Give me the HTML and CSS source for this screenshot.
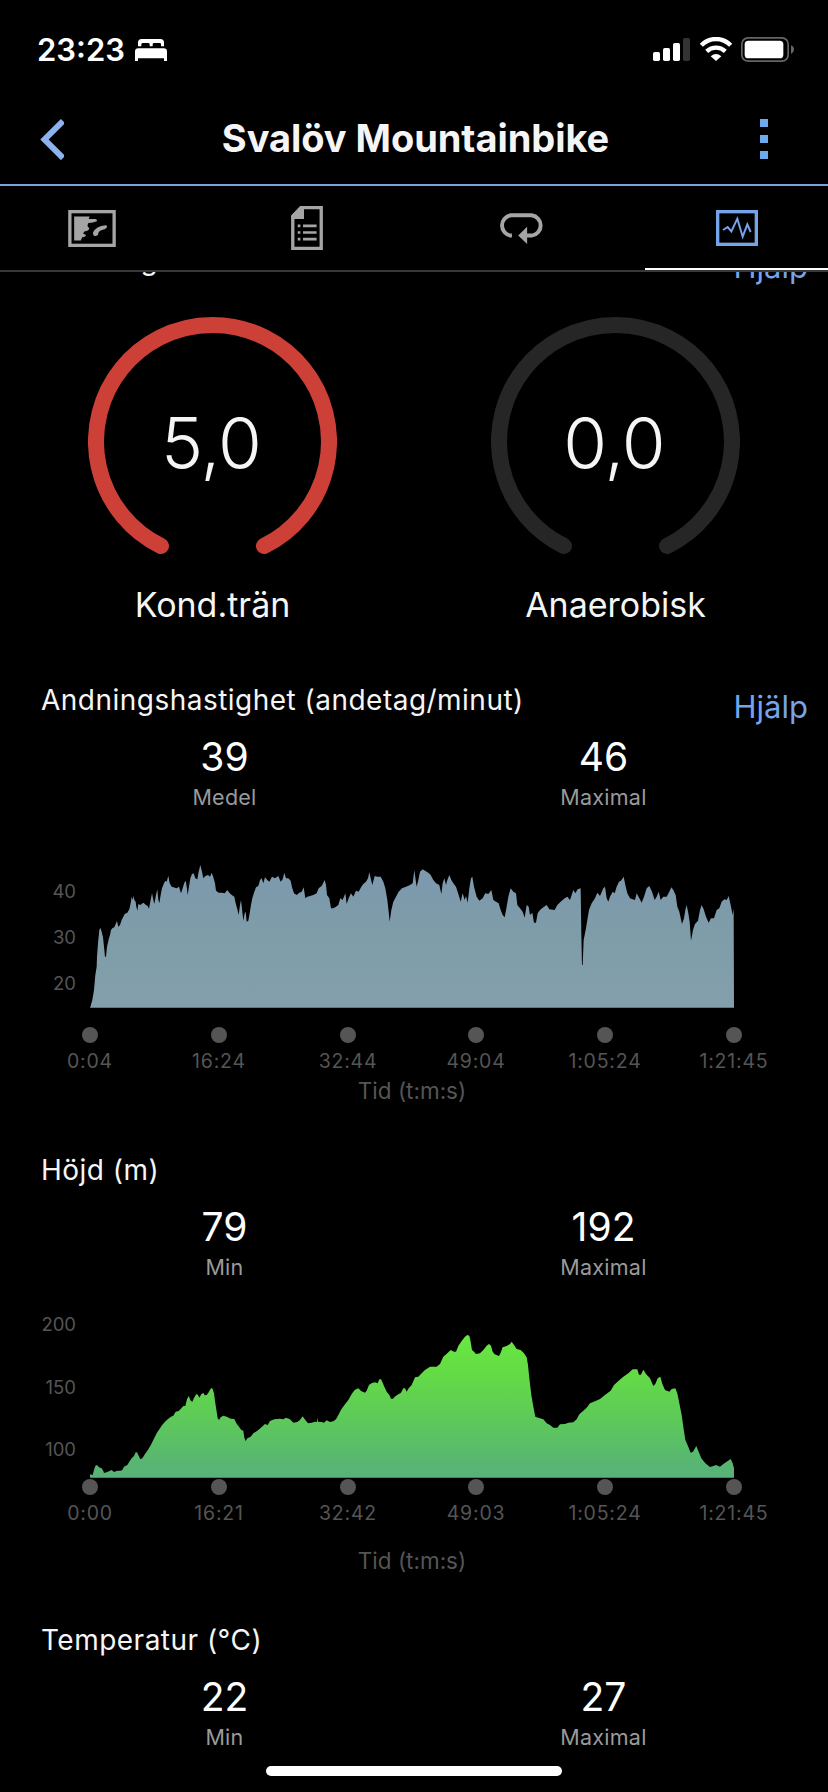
FILE: index.html
```html
<!DOCTYPE html>
<html lang="sv">
<head>
<meta charset="utf-8">
<title>Svalöv Mountainbike</title>
<link rel="stylesheet" href="styles.css">
</head>
<body>

<div class="statusbar">
  <span class="clock">23:23</span>
  <svg class="bed" width="32" height="22" viewBox="0 0 96 66">
    <path fill="#fff" d="M9 22V11Q9 0 20 0H76Q87 0 87 11V22H78V16Q78 12 74 12H58Q53 12 53 16V22H44V16Q44 12 39 12H24Q19 12 19 16V22zM0 66V38Q0 28 10 28H86Q96 28 96 38V66H87V58H9V66z"/>
  </svg>
  <div class="status-icons">
    <svg width="37" height="23" viewBox="0 0 111 69">
      <rect x="0" y="42" width="21" height="27" rx="5" fill="#fff"/>
      <rect x="30" y="30" width="21" height="39" rx="5" fill="#fff"/>
      <rect x="60" y="15" width="21" height="54" rx="5" fill="#fff"/>
      <rect x="90" y="0" width="21" height="69" rx="5" fill="#333"/>
    </svg>
    <svg width="32" height="24" viewBox="0 0 96 72">
      <path d="M4 25Q22 6 48 6T92 25M20 43Q32 32 48 32T76 43" fill="none" stroke="#fff" stroke-width="13"/>
      <path d="M32 58Q48 44 64 58L48 72z" fill="#fff"/>
    </svg>
    <svg width="53" height="25" viewBox="0 0 159 75">
      <rect x="2.5" y="2.5" width="139" height="70" rx="19" fill="none" stroke="#666" stroke-width="5"/>
      <rect x="11" y="11" width="116" height="53" rx="11" fill="#fff"/>
      <path d="M150 25Q159 29 159 37.500T150 51z" fill="#666"/>
    </svg>
  </div>
</div>

<div class="navbar">
  <svg class="back" width="24" height="42" viewBox="0 0 24 42">
    <path d="M23 3L4.500 21.500L23 40" fill="none" stroke="#8ab3f0" stroke-width="6"/>
  </svg>
  <h1>Svalöv Mountainbike</h1>
  <div class="more"><i></i><i></i><i></i></div>
</div>

<div class="tabs">
  <div class="tab">
    <svg width="48" height="37" viewBox="0 0 144 112">
      <rect x="5" y="5" width="134" height="102" fill="none" stroke="#a5a5a5" stroke-width="10"/>
      <path fill="#a5a5a5" d="M18 20H65L62 27H82Q90 29 86 34Q80 38 61 39L58 48L64 56Q62 63 49 65L45 71L54 76Q52 83 43 82L38 92H18z"/>
      <path fill="#a5a5a5" d="M113 46Q84 49 75 68Q75 82 85 78Q92 76 92 67Q95 63 105 60Q120 56 117 48z"/>
    </svg>
  </div>
  <div class="tab">
    <svg width="32" height="44" viewBox="0 0 96 133">
      <path d="M30 5H91V128H5V32z" fill="none" stroke="#a5a5a5" stroke-width="10"/>
      <path d="M0 39V29L28 0H39V39z" fill="#a5a5a5"/>
      <path d="M36 60H77M36 80H77M36 100H77M20 60H28M20 80H28M20 100H28" stroke="#a5a5a5" stroke-width="8"/>
    </svg>
  </div>
  <div class="tab">
    <svg width="45" height="31" viewBox="0 0 136 94">
      <path d="M39 68.500H36A31 31 0 0 1 36 7H99A31 31 0 0 1 99 68.500H84" fill="none" stroke="#a5a5a5" stroke-width="12"/>
      <path d="M58 68L85 42V94z" fill="#a5a5a5"/>
    </svg>
  </div>
  <div class="tab active">
    <svg width="42" height="36" viewBox="0 0 126 108">
      <rect x="5" y="5" width="116" height="98" fill="none" stroke="#74a4ea" stroke-width="10"/>
      <path d="M21 60L35 51L46 64L64 26L80 80L94 43L104 66" fill="none" stroke="#74a4ea" stroke-width="6"/>
    </svg>
  </div>
</div>

<div class="content">

  <div class="section effect">
    <div class="head"><h2>Träningseffekt</h2><a class="help">Hjälp</a></div>
    <div class="gauges">
      <div class="gauge">
        <svg width="249" height="249" viewBox="0 0 249 249">
          <path class="ring red" d="M73 229A116.500 116.500 0 1 1 176 229"/>
          <text x="123" y="151.500">5,0</text>
        </svg>
        <p>Kond.trän</p>
      </div>
      <div class="gauge">
        <svg width="249" height="249" viewBox="0 0 249 249">
          <path class="ring" d="M73 229A116.500 116.500 0 1 1 176 229"/>
          <text x="123" y="151.500">0,0</text>
        </svg>
        <p>Anaerobisk</p>
      </div>
    </div>
  </div>

  <div class="section">
    <div class="head"><h2>Andningshastighet (andetag/minut)</h2><a class="help">Hjälp</a></div>
    <div class="stats">
      <div class="stat"><b>39</b><span>Medel</span></div>
      <div class="stat"><b>46</b><span>Maximal</span></div>
    </div>
    <svg class="chart" width="828" height="338" viewBox="0 0 828 338">
      <defs>
        <linearGradient id="breath" x1="0" y1="0" x2="0" y2="1">
          <stop offset="0" stop-color="#7c99af"/>
          <stop offset=".5" stop-color="#7f9ca9"/>
          <stop offset="1" stop-color="#829fab"/>
        </linearGradient>
      </defs>
      <polygon fill="url(#breath)" transform="translate(90 38) scale(.33333)" points="
        0,473 2,468 7,450 12,420 16,375 20,350 21,320 24,280 28,240 31,233 35,245 39,262 42,290 45,320 48,320
        51,290 56,268 60,255 63,240 67,235 73,232 78,220 81,213 85,230 90,225 95,210 100,200 104,192 112,188
        118,178 122,160 125,140 128,150 130,137 133,150 137,155 139,170 142,182 145,162 151,165 160,158 168,165
        173,168 177,176 182,150 186,130 190,150 193,162 198,135 202,118 205,150 208,160 212,135 216,115 222,100
        226,92 230,95 235,77 239,100 245,110 250,112 260,115 267,110 273,130 278,115 283,98 287,92 290,110
        293,135 297,110 301,85 306,72 311,70 316,85 322,88 326,65 331,45 336,65 340,85 346,78 354,75 360,80
        365,68 370,82 375,100 378,122 386,128 395,128 404,130 412,120 418,128 425,135 433,140 437,160 442,178
        446,195 450,165 453,150 457,185 460,212 464,190 467,185 470,215 475,212 479,190 483,165 487,145 492,128
        498,112 505,108 510,90 515,85 520,100 525,82 532,90 538,95 546,80 555,85 565,78 572,95 578,88 583,68
        588,85 595,85 602,92 606,112 612,130 620,135 628,128 635,125 641,112 646,145 652,140 660,138 670,135
        680,130 686,115 695,108 704,90 708,105 711,135 718,145 723,175 730,175 738,170 745,165 751,145 758,150
        766,130 770,162 776,145 783,130 790,140 798,122 806,125 814,110 820,102 828,95 834,85 838,67 842,85
        847,105 854,78 862,80 872,80 880,95 886,115 892,150 896,185 899,215 904,180 910,155 918,140 926,125
        936,115 948,110 960,105 968,100 973,60 977,90 980,110 985,90 990,65 998,58 1005,62 1015,68 1022,75
        1030,90 1038,100 1048,105 1054,133 1058,100 1063,85 1068,105 1072,90 1078,75 1084,90 1090,100 1098,110
        1106,135 1112,155 1118,130 1124,150 1128,138 1133,158 1138,115 1143,85 1147,80 1152,110 1160,140
        1168,152 1178,145 1186,130 1195,132 1204,120 1210,150 1218,155 1226,160 1232,180 1238,195 1244,202
        1250,170 1255,140 1262,115 1270,125 1278,130 1282,165 1290,175 1298,185 1304,203 1310,165 1316,170
        1320,195 1327,188 1332,218 1338,218 1343,190 1350,180 1360,172 1370,165 1378,178 1394,180 1402,165
        1412,155 1424,145 1432,140 1440,150 1445,135 1450,120 1456,130 1463,118 1472,115 1474,250 1476,345
        1478,345 1481,270 1488,235 1492,210 1497,180 1505,160 1515,145 1522,128 1530,138 1540,115 1545,110
        1550,145 1555,155 1560,140 1568,125 1574,130 1580,110 1587,95 1593,92 1598,85 1601,80 1606,105 1612,130
        1620,145 1628,148 1635,150 1640,130 1648,145 1655,158 1662,140 1670,115 1678,108 1686,125 1694,150
        1700,140 1706,125 1712,150 1720,140 1730,140 1738,125 1744,112 1750,120 1757,135 1762,170 1768,185
        1776,222 1782,205 1786,180 1790,165 1795,190 1799,215 1803,272 1809,240 1815,222 1824,212 1830,180
        1835,165 1841,178 1848,200 1856,218 1863,205 1872,205 1880,180 1888,175 1895,155 1903,148 1910,150
        1916,138 1922,165 1928,195 1931,175 1932,473"/>
      <g class="ylabels">
        <text x="76" y="86">40</text>
        <text x="76" y="132">30</text>
        <text x="76" y="178">20</text>
      </g>
      <g class="dots">
        <circle cx="90" cy="223" r="8"/><circle cx="219" cy="223" r="8"/><circle cx="348" cy="223" r="8"/>
        <circle cx="476" cy="223" r="8"/><circle cx="605" cy="223" r="8"/><circle cx="734" cy="223" r="8"/>
      </g>
      <g class="xlabels">
        <text x="90" y="256">0:04</text>
        <text x="219" y="256">16:24</text>
        <text x="348" y="256">32:44</text>
        <text x="476" y="256">49:04</text>
        <text x="605" y="256">1:05:24</text>
        <text x="734" y="256">1:21:45</text>
      </g>
      <text class="unit" x="412" y="287">Tid (t:m:s)</text>
    </svg>
  </div>

  <div class="section">
    <div class="head"><h2>Höjd (m)</h2></div>
    <div class="stats">
      <div class="stat"><b>79</b><span>Min</span></div>
      <div class="stat"><b>192</b><span>Maximal</span></div>
    </div>
    <svg class="chart" width="828" height="338" viewBox="0 0 828 338">
      <defs>
        <linearGradient id="height" x1="0" y1="0" x2="0" y2="1">
          <stop offset="0" stop-color="#69e842"/>
          <stop offset=".25" stop-color="#64dc45"/>
          <stop offset=".6" stop-color="#5dc95a"/>
          <stop offset=".9" stop-color="#58b572"/>
          <stop offset="1" stop-color="#58b27a"/>
        </linearGradient>
      </defs>
      <polygon fill="url(#height)" transform="translate(90 24.670) scale(.33333)" points="
        0,513 0,503 8,505 12,490 16,478 21,475 27,482 35,485 40,493 42,499 52,496 65,490 72,496 82,492 92,492
        97,490 102,480 112,475 118,465 125,455 132,448 137,437 141,437 146,447 151,458 157,455 165,442 175,428
        183,414 191,398 200,380 208,368 216,356 225,345 234,337 243,330 250,327 257,315 266,313 274,305 280,298
        286,298 291,278 296,268 302,282 307,285 313,272 319,262 324,265 328,273 334,263 340,258 344,266 350,265
        356,257 363,245 367,245 372,260 376,290 380,315 383,335 387,340 392,332 400,327 410,330 422,336 433,337
        439,350 448,362 454,370 460,372 463,393 467,403 472,395 482,390 490,380 502,372 512,364 525,352 533,355
        540,343 553,338 570,336 580,338 588,333 600,338 610,348 622,346 630,340 638,329 646,340 654,350 665,348
        675,345 681,346 682,332 684,345 695,346 702,348 710,341 720,346 730,344 738,338 745,325 754,308 765,293
        775,280 785,262 794,250 805,245 813,253 825,258 830,252 837,235 846,229 855,227 863,230 868,218 873,218
        878,228 883,240 890,255 898,265 903,276 909,276 914,270 925,263 933,258 940,245 945,245 950,255 956,245
        965,235 975,212 985,210 995,200 1005,190 1020,180 1040,180 1050,172 1060,150 1072,140 1082,130 1092,135
        1098,135 1105,118 1115,103 1125,90 1132,85 1138,87 1142,105 1146,130 1152,135 1158,142 1170,140 1180,130
        1190,117 1197,112 1203,117 1208,135 1214,143 1227,148 1232,138 1238,122 1250,118 1260,112 1265,105
        1272,115 1280,127 1292,130 1302,140 1310,152 1314,175 1318,215 1324,265 1330,300 1336,330 1345,333
        1360,338 1370,350 1380,355 1390,363 1402,363 1410,353 1425,352 1435,348 1450,347 1460,338 1468,323
        1480,312 1490,303 1500,290 1515,284 1530,277 1545,265 1562,252 1572,235 1585,223 1600,210 1615,200
        1628,188 1642,188 1647,204 1653,204 1660,189 1668,202 1680,215 1690,238 1696,232 1703,215 1711,210
        1717,232 1725,250 1738,255 1745,247 1756,245 1762,260 1768,290 1775,325 1780,360 1786,400 1794,418
        1802,438 1809,435 1819,418 1826,435 1834,455 1846,470 1860,481 1870,478 1878,475 1890,480 1900,472
        1910,465 1922,457 1928,470 1932,485 1932,513"/>
      <g class="ylabels">
        <text x="76" y="49">200</text>
        <text x="76" y="111.500">150</text>
        <text x="76" y="174">100</text>
      </g>
      <g class="dots">
        <circle cx="90" cy="205" r="8"/><circle cx="219" cy="205" r="8"/><circle cx="348" cy="205" r="8"/>
        <circle cx="476" cy="205" r="8"/><circle cx="605" cy="205" r="8"/><circle cx="734" cy="205" r="8"/>
      </g>
      <g class="xlabels">
        <text x="90" y="238">0:00</text>
        <text x="219" y="238">16:21</text>
        <text x="348" y="238">32:42</text>
        <text x="476" y="238">49:03</text>
        <text x="605" y="238">1:05:24</text>
        <text x="734" y="238">1:21:45</text>
      </g>
      <text class="unit" x="412" y="287">Tid (t:m:s)</text>
    </svg>
  </div>

  <div class="section">
    <div class="head"><h2>Temperatur (°C)</h2></div>
    <div class="stats">
      <div class="stat"><b>22</b><span>Min</span></div>
      <div class="stat"><b>27</b><span>Maximal</span></div>
    </div>
  </div>

</div>

<div class="home"></div>

</body>
</html>
```
FILE: styles.css
```css
* { box-sizing:border-box; }
body {
  margin:0;
  width:828px;
  height:1792px;
  display:flex;
  flex-direction:column;
  overflow:hidden;
  position:relative;
  background:#000;
  color:#f5f5f5;
  font-family:Inter, "Liberation Sans", sans-serif;
}
h1, h2, p { margin:0; font-weight:400; }
svg { display:block; }

/* status bar */
.statusbar {
  flex:none;
  height:98px;
  padding:0 34px 0 37px;
  display:flex;
  align-items:center;
}
.clock {
  width:98px;
  font-size:31px;
  font-weight:600;
  color:#fff;
  white-space:nowrap;
}
.bed { margin-top:2px; }
.status-icons {
  margin-left:auto;
  display:flex;
  align-items:center;
  gap:9.5px;
}

/* title bar */
.navbar {
  flex:none;
  height:88px;
  padding:0 60px 4px 40px;
  display:flex;
  align-items:center;
  justify-content:space-between;
  border-bottom:2px solid #7ba2dc;
}
.navbar h1 {
  padding:0 0 3px 7px;
  font-size:38px;
  font-weight:700;
  letter-spacing:-0.05px;
}
.more {
  display:flex;
  flex-direction:column;
  gap:8px;
}
.more i {
  width:8px;
  height:8px;
  background:#6fa8ee;
}

/* tabs */
.tabs {
  flex:none;
  height:86px;
  display:grid;
  grid-template-columns:repeat(4, 183px);
  column-gap:32px;
  border-bottom:2px solid #383838;
}
.tab {
  display:flex;
  align-items:center;
  justify-content:center;
  border-top:2px solid transparent;
  border-bottom:2px solid transparent;
}
.tab.active { border-bottom-color:#fff; }

/* scrolled page */
.content {
  flex:1;
  min-height:0;
  overflow:hidden;
}
.effect { margin-top:-32px; height:440px; }
.head {
  height:53px;
  padding:0 20px 0 41px;
  display:flex;
  justify-content:space-between;
}
.head h2 {
  font-size:28px;
  line-height:40px;
  letter-spacing:0.48px;
}
.effect .head h2 { letter-spacing:2.8px; }
.help {
  padding-top:7px;
  font-size:31px;
  line-height:40px;
  color:#74a4ea;
}
.gauges {
  padding:24px 11px 0;
  display:grid;
  grid-template-columns:1fr 1fr;
}
.gauge {
  display:flex;
  flex-direction:column;
  align-items:center;
}
.ring {
  fill:none;
  stroke:#262626;
  stroke-width:16;
  stroke-linecap:round;
}
.ring.red { stroke:#cd4038; }
.gauge text {
  font-size:71px;
  font-weight:350;
  fill:#f5f5f5;
  text-anchor:middle;
  letter-spacing:-0.8px;
}
.gauge p {
  margin-top:18px;
  font-size:34px;
  line-height:42px;
}

.stats {
  padding:0 35px;
  display:grid;
  grid-template-columns:1fr 1fr;
}
.stat {
  display:flex;
  flex-direction:column;
  align-items:center;
}
.stat b {
  height:49px;
  font-size:39px;
  font-weight:400;
  line-height:48px;
  color:#fff;
}
.stat span {
  font-size:21.5px;
  line-height:30px;
  letter-spacing:0.25px;
  color:#9a9a9a;
}

/* charts */
.chart text { fill:#555; }
.ylabels text { font-size:18.5px; text-anchor:end; }
.xlabels text { font-size:19.5px; text-anchor:middle; letter-spacing:0.8px; }
.chart .unit { font-size:22.5px; text-anchor:middle; }
.dots circle { fill:#555; }

.home {
  position:absolute;
  left:266px;
  top:1766px;
  width:296px;
  height:10px;
  border-radius:5px;
  background:#fff;
}
```
